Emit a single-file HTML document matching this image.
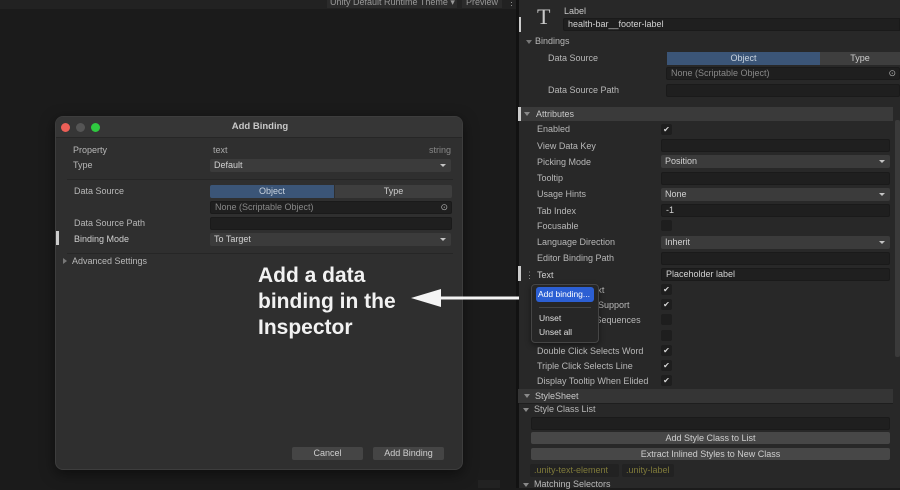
<!DOCTYPE html>
<html><head><meta charset="utf-8"><style>
*{margin:0;padding:0;box-sizing:border-box}
body{width:900px;height:488px;overflow:hidden;background:#1b1b1b;font-family:"Liberation Sans",sans-serif;font-size:9px;color:#c4c4c4;position:relative}
.a{position:absolute}
.lbl{position:absolute;color:#b8b8b8;font-size:9px;line-height:12px}
.fld{position:absolute;background:#1f1f1f;border:1px solid #1a1a1a;border-radius:2px;height:13px;color:#d2d2d2;font-size:9px;line-height:11px;padding-left:4px}
.dd{position:absolute;background:#3b3b3b;border-radius:2px;height:13px;color:#d2d2d2;font-size:9px;line-height:13px;padding-left:4px}
.dd:after{content:"";position:absolute;right:5px;top:5px;border-left:3px solid transparent;border-right:3px solid transparent;border-top:3px solid #c4c4c4}
.chk{position:absolute;width:11px;height:11px;background:#1e1e1e;border-radius:2px;color:#d8d8d8;font-size:8px;line-height:11px;text-align:center}
.hdr{position:absolute;left:518px;width:375px;height:14px;background:#3a3a3a;color:#c8c8c8;font-size:9px;line-height:14px;padding-left:18px}
.tri{position:absolute;left:6px;top:5px;border-left:3px solid transparent;border-right:3px solid transparent;border-top:4px solid #8a8a8a}
.btn{position:absolute;background:#474747;border-radius:2px;height:13px;text-align:center;line-height:13px;color:#cfcfcf;font-size:9px}
</style></head><body>
<div class="a" style="left:0;top:0;width:516px;height:9px;background:#222"></div>
<div class="a" style="left:327px;top:-3px;width:130px;height:11px;background:#2b2b2b;color:#999;font-size:9px;padding-left:3px;line-height:10px">Unity Default Runtime Theme ▾</div>
<div class="a" style="left:462px;top:-3px;width:40px;height:11px;background:#2b2b2b;color:#999;font-size:9px;padding-left:4px;line-height:10px">Preview</div>
<div class="a" style="left:507px;top:-3px;width:8px;height:11px;color:#999;font-size:9px;line-height:10px">⋮</div>
<div class="a" style="left:478px;top:480px;width:22px;height:8px;background:#222"></div>
<div class="a" style="left:516px;top:0;width:3px;height:488px;background:#121212"></div>

<div class="a" style="left:55px;top:116px;width:408px;height:354px;background:#2f2f2f;border:1px solid #3d3d3d;border-radius:8px;box-shadow:0 4px 14px rgba(0,0,0,.5);overflow:hidden">
 <div class="a" style="left:0;top:0;width:408px;height:21px;background:#363636;border-bottom:1px solid #262626"></div>
 <div class="a" style="left:5px;top:6px;width:9px;height:9px;border-radius:50%;background:#ec5f57"></div>
 <div class="a" style="left:20px;top:6px;width:9px;height:9px;border-radius:50%;background:#555"></div>
 <div class="a" style="left:35px;top:6px;width:9px;height:9px;border-radius:50%;background:#2fc840"></div>
 <div class="a" style="left:0;top:4px;width:408px;text-align:center;font-weight:bold;color:#c8c8c8;font-size:9.5px">Add Binding</div>
 <div class="lbl" style="left:17px;top:27px">Property</div>
 <div class="lbl" style="left:157px;top:27px;color:#aaa">text</div>
 <div class="lbl" style="left:373px;top:27px;color:#888">string</div>
 <div class="lbl" style="left:17px;top:42px">Type</div>
 <div class="dd" style="left:154px;top:42px;width:241px">Default</div>
 <div class="a" style="left:11px;top:62px;width:386px;height:1px;background:#262626"></div>
 <div class="lbl" style="left:18px;top:68px">Data Source</div>
 <div class="a" style="left:154px;top:68px;width:124px;height:13px;background:#3b5577;color:#c9d3de;text-align:center;line-height:13px;border-radius:2px 0 0 2px">Object</div>
 <div class="a" style="left:279px;top:68px;width:117px;height:13px;background:#3e3e3e;color:#ccc;text-align:center;line-height:13px;border-radius:0 2px 2px 0">Type</div>
 <div class="fld" style="left:154px;top:84px;width:242px;color:#888">None (Scriptable Object)<span class="a" style="right:3px;top:0;color:#aaa">⊙</span></div>
 <div class="lbl" style="left:18px;top:100px">Data Source Path</div>
 <div class="fld" style="left:154px;top:100px;width:242px"></div>
 <div class="a" style="left:0;top:114px;width:3px;height:14px;background:#ccc"></div>
 <div class="lbl" style="left:18px;top:116px;color:#d0d0d0">Binding Mode</div>
 <div class="dd" style="left:154px;top:116px;width:241px">To Target</div>
 <div class="a" style="left:11px;top:136px;width:386px;height:1px;background:#262626"></div>
 <div class="a" style="left:7px;top:141px;border-top:3px solid transparent;border-bottom:3px solid transparent;border-left:4px solid #777"></div>
 <div class="lbl" style="left:16px;top:138px">Advanced Settings</div>
 <div class="btn" style="left:236px;top:330px;width:71px;background:#454545">Cancel</div>
 <div class="btn" style="left:317px;top:330px;width:71px;background:#454545">Add Binding</div>
</div>

<div class="a" style="left:258px;top:263px;color:#f2f2f2;font-weight:bold;font-size:21px;line-height:26px;width:200px">Add a data<br>binding in the<br>Inspector</div>
<svg class="a" style="left:405px;top:285px" width="120" height="26"><polygon points="6,13 36,4 36,22" fill="#f4f4f4"/><rect x="34" y="11.5" width="84" height="3" fill="#f4f4f4"/></svg>

<div class="a" style="left:519px;top:0;width:381px;height:488px;background:#282828"></div>
<div class="a" style="left:519px;top:17px;width:2px;height:15px;background:#ccc"></div>
<div class="a" style="left:537px;top:4px;font-family:'Liberation Serif',serif;font-size:22px;color:#c8c8c8">T</div>
<div class="lbl" style="left:564px;top:5px;color:#c8c8c8">Label</div>
<div class="fld" style="left:563px;top:18px;width:337px;border-radius:2px 0 0 2px">health-bar__footer-label</div>
<div class="a" style="left:526px;top:40px;border-left:3px solid transparent;border-right:3px solid transparent;border-top:4px solid #777"></div>
<div class="lbl" style="left:535px;top:35px">Bindings</div>
<div class="lbl" style="left:548px;top:52px">Data Source</div>
<div class="a" style="left:667px;top:52px;width:153px;height:13px;background:#3b5577;color:#c9d3de;text-align:center;line-height:13px">Object</div>
<div class="a" style="left:820px;top:52px;width:80px;height:13px;background:#3e3e3e;color:#ccc;text-align:center;line-height:13px">Type</div>
<div class="fld" style="left:666px;top:67px;width:234px;color:#888">None (Scriptable Object)<span class="a" style="right:3px;top:0;color:#aaa">⊙</span></div>
<div class="lbl" style="left:548px;top:84px">Data Source Path</div>
<div class="fld" style="left:666px;top:84px;width:234px"></div>
<div class="hdr" style="top:107px"><span class="tri"></span>Attributes</div>
<div class="a" style="left:518px;top:107px;width:3px;height:14px;background:#ccc"></div>
<div class="a" style="left:895px;top:120px;width:5px;height:237px;background:#3a3a3a;border-radius:2px"></div>
<div class="lbl" style="left:537px;top:123px">Enabled</div><div class="chk" style="left:661px;top:124px">✔</div>
<div class="lbl" style="left:537px;top:140px">View Data Key</div><div class="fld" style="left:661px;top:139px;width:229px"></div>
<div class="lbl" style="left:537px;top:156px">Picking Mode</div><div class="dd" style="left:661px;top:155px;width:229px">Position</div>
<div class="lbl" style="left:537px;top:172px">Tooltip</div><div class="fld" style="left:661px;top:172px;width:229px"></div>
<div class="lbl" style="left:537px;top:188px">Usage Hints</div><div class="dd" style="left:661px;top:188px;width:229px">None</div>
<div class="lbl" style="left:537px;top:205px">Tab Index</div><div class="fld" style="left:661px;top:204px;width:229px">-1</div>
<div class="lbl" style="left:537px;top:220px">Focusable</div><div class="chk" style="left:661px;top:220px"></div>
<div class="lbl" style="left:537px;top:236px">Language Direction</div><div class="dd" style="left:661px;top:236px;width:229px">Inherit</div>
<div class="lbl" style="left:537px;top:252px">Editor Binding Path</div><div class="fld" style="left:661px;top:252px;width:229px"></div>
<div class="a" style="left:518px;top:266px;width:3px;height:15px;background:#ccc"></div>
<div class="lbl" style="left:525px;top:269px;color:#888">⋮</div>
<div class="lbl" style="left:537px;top:269px;color:#d0d0d0">Text</div><div class="fld" style="left:661px;top:268px;width:229px">Placeholder label</div>
<div class="lbl" style="left:537px;top:284px">Enable Rich Text</div><div class="chk" style="left:661px;top:284px">✔</div>
<div class="lbl" style="left:537px;top:299px">Emoji Fallback Support</div><div class="chk" style="left:661px;top:299px">✔</div>
<div class="lbl" style="left:537px;top:314px">Parse Escape Sequences</div><div class="chk" style="left:661px;top:314px"></div>
<div class="lbl" style="left:537px;top:329px">Selectable</div><div class="chk" style="left:661px;top:330px"></div>
<div class="lbl" style="left:537px;top:345px">Double Click Selects Word</div><div class="chk" style="left:661px;top:345px">✔</div>
<div class="lbl" style="left:537px;top:360px">Triple Click Selects Line</div><div class="chk" style="left:661px;top:360px">✔</div>
<div class="lbl" style="left:537px;top:375px">Display Tooltip When Elided</div><div class="chk" style="left:661px;top:375px">✔</div>
<div class="hdr" style="top:389px;background:#353535;padding-left:17px"><span class="tri"></span>StyleSheet</div>
<div class="a" style="left:519px;top:403px;width:374px;height:1px;background:#1e1e1e"></div>
<div class="a" style="left:523px;top:408px;border-left:3px solid transparent;border-right:3px solid transparent;border-top:4px solid #888"></div>
<div class="lbl" style="left:534px;top:403px">Style Class List</div>
<div class="fld" style="left:531px;top:417px;width:359px"></div>
<div class="btn" style="left:531px;top:432px;width:359px;height:12px;line-height:12px">Add Style Class to List</div>
<div class="btn" style="left:531px;top:448px;width:359px;height:12px;line-height:12px">Extract Inlined Styles to New Class</div>
<div class="a" style="left:530px;top:464px;width:89px;height:13px;background:#222;color:#7f7a3a;line-height:13px;padding-left:4px;border-radius:2px">.unity-text-element</div>
<div class="a" style="left:622px;top:464px;width:52px;height:13px;background:#222;color:#7f7a3a;line-height:13px;padding-left:4px;border-radius:2px">.unity-label</div>
<div class="a" style="left:523px;top:483px;border-left:3px solid transparent;border-right:3px solid transparent;border-top:4px solid #888"></div>
<div class="lbl" style="left:534px;top:478px">Matching Selectors</div>

<div class="a" style="left:531px;top:284px;width:68px;height:59px;background:#262626;border:1px solid #454545;border-radius:4px;box-shadow:0 2px 6px rgba(0,0,0,.5)"></div>
<div class="a" style="left:536px;top:287px;width:58px;height:15px;background:#2c5fd3;border-radius:3px;color:#fff;font-size:8.5px;line-height:15px;padding-left:2px">Add binding...</div>
<div class="a" style="left:539px;top:307px;width:52px;height:1px;background:#444"></div>
<div class="a" style="left:539px;top:313px;color:#e0e0e0;font-size:8.5px">Unset</div>
<div class="a" style="left:539px;top:327px;color:#e0e0e0;font-size:8.5px">Unset all</div>
</body></html>
